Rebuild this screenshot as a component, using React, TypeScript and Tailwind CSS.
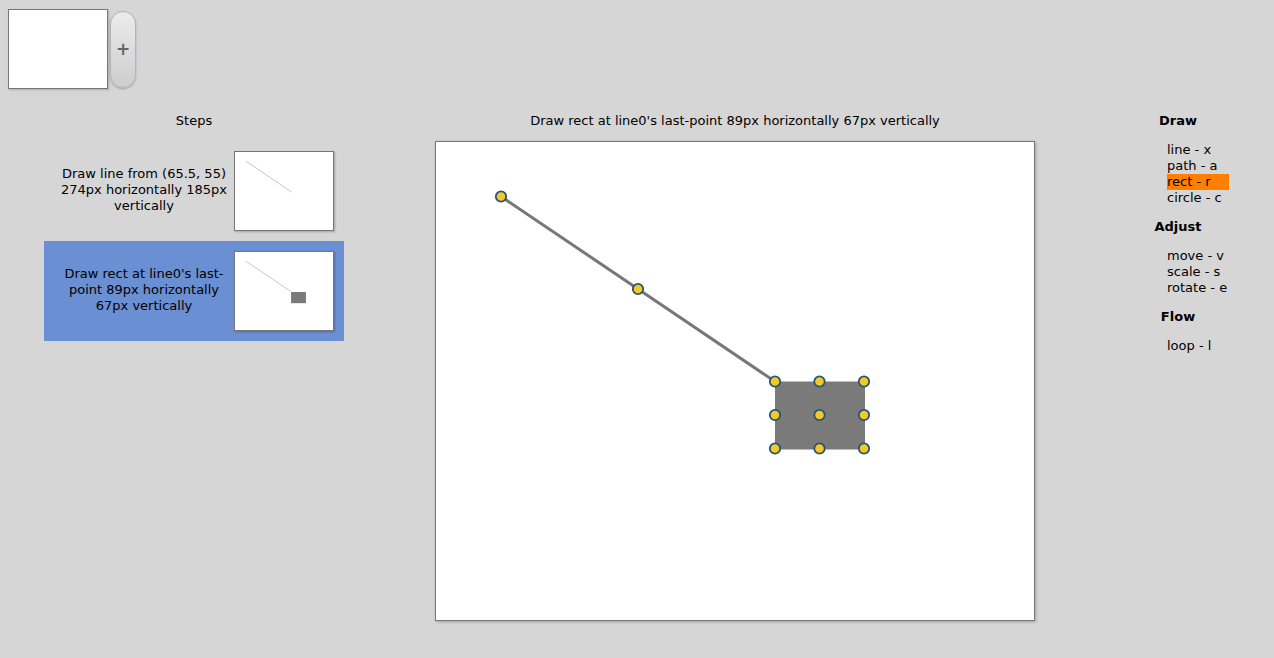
import React from 'react';

const font = { fontFamily: '"DejaVu Sans", Verdana, sans-serif' };

// canvas coordinates (600x480)
const line = { x1: 65.5, y1: 55, x2: 339.5, y2: 240 };
const rect = { x: 339.5, y: 240, w: 89, h: 67 };

function Handle({ cx, cy }: { cx: number; cy: number }) {
  return <circle cx={cx} cy={cy} r={5.2} fill="#f6c827" stroke="#235676" strokeWidth={1.8} />;
}

function Thumb({ withRect }: { withRect?: boolean }) {
  return (
    <div className="w-[100px] h-[80px] bg-white border border-[#777] shadow-[1px_1px_2px_rgba(0,0,0,0.25)] shrink-0">
      <svg width="98" height="78" viewBox="0 0 98 78">
        <line x1={line.x1 / 6} y1={line.y1 / 6} x2={line.x2 / 6} y2={line.y2 / 6} stroke="#c8c8c8" strokeWidth={1} />
        {withRect && <rect x={rect.x / 6 - 0.5} y={rect.y / 6} width={rect.w / 6} height={rect.h / 6} fill="#7a7a7a" />}
      </svg>
    </div>
  );
}

function StepRow({ text, selected, withRect }: { text: React.ReactNode; selected?: boolean; withRect?: boolean }) {
  return (
    <div className={`flex items-center h-[100px] pl-[10px] pr-[10px] ${selected ? 'bg-[#6a8fd3]' : ''}`}>
      <div className="flex-1 text-center text-[13px] leading-[16px] text-black px-[2px] pb-[3px]">{text}</div>
      <Thumb withRect={withRect} />
    </div>
  );
}

const groups = [
  { title: 'Draw', items: ['line - x', 'path - a', 'rect - r', 'circle - c'] },
  { title: 'Adjust', items: ['move - v', 'scale - s', 'rotate - e'] },
  { title: 'Flow', items: ['loop - l'] },
];

export default function App() {
  const corners = [
    [rect.x, rect.y],
    [rect.x + rect.w / 2, rect.y],
    [rect.x + rect.w, rect.y],
    [rect.x, rect.y + rect.h / 2],
    [rect.x + rect.w / 2, rect.y + rect.h / 2],
    [rect.x + rect.w, rect.y + rect.h / 2],
    [rect.x, rect.y + rect.h],
    [rect.x + rect.w / 2, rect.y + rect.h],
    [rect.x + rect.w, rect.y + rect.h],
  ];

  return (
    <div className="w-[1274px] h-[658px] bg-[#d6d6d6] overflow-hidden text-black" style={font}>
      {/* top bar */}
      <div className="flex items-start pt-[9px] pl-[8px] gap-[2px]">
        <div className="w-[100px] h-[80px] bg-white border border-[#777] shadow-[1px_1px_2px_rgba(0,0,0,0.2)]" />
        <div className="mt-[2px] w-[26px] h-[77px] rounded-full border border-[#b5b5b5] bg-gradient-to-b from-[#ececec] to-[#cdcdcd] shadow-[0_1px_2px_rgba(0,0,0,0.25)] flex items-center justify-center text-[#666] text-[17px] font-bold leading-none">
          +
        </div>
      </div>

      <div className="flex mt-[15px]">
        {/* steps */}
        <div className="ml-[44px] w-[300px]">
          <div className="h-[37px] pt-[9px] text-center text-[13px] leading-[16px]">Steps</div>
          <StepRow text={<>Draw line from (65.5, 55)<br />274px horizontally 185px<br />vertically</>} />
          <StepRow selected withRect text={<>Draw rect at line0's last-<br />point 89px horizontally<br />67px vertically</>} />
        </div>

        {/* canvas */}
        <div className="ml-[91px] w-[600px]">
          <div className="h-[37px] pt-[9px] text-center text-[13px] leading-[16px]">
            Draw rect at line0's last-point 89px horizontally 67px vertically
          </div>
          <div className="w-[600px] h-[480px] bg-white border border-[#777] shadow-[1px_1px_3px_rgba(0,0,0,0.25)]">
            <svg width="598" height="478" viewBox="0.5 0.5 598 478">
              <line x1={line.x1} y1={line.y1} x2={line.x2} y2={line.y2} stroke="#777" strokeWidth={3} />
              <rect x={rect.x} y={rect.y} width={rect.w + 1} height={rect.h + 1} fill="#7a7a7a" />
              <Handle cx={line.x1} cy={line.y1} />
              <Handle cx={(line.x1 + line.x2) / 2} cy={(line.y1 + line.y2) / 2} />
              {corners.map(([cx, cy], i) => (
                <Handle key={i} cx={cx} cy={cy} />
              ))}
            </svg>
          </div>
        </div>

        {/* tools */}
        <div className="ml-[113px] w-[60px] pt-[9px] text-[13px] leading-[16px]">
          {groups.map((g, gi) => (
            <div key={g.title} className={gi > 0 ? 'mt-[13px]' : ''}>
              <div className="text-center font-bold">{g.title}</div>
              <div className="mt-[13px] ml-[19px]">
                {g.items.map((it) => (
                  <div key={it} className={`w-[62px] whitespace-nowrap ${it === 'rect - r' ? 'bg-[#ff7f00]' : ''}`}>
                    {it}
                  </div>
                ))}
              </div>
            </div>
          ))}
        </div>
      </div>
    </div>
  );
}
